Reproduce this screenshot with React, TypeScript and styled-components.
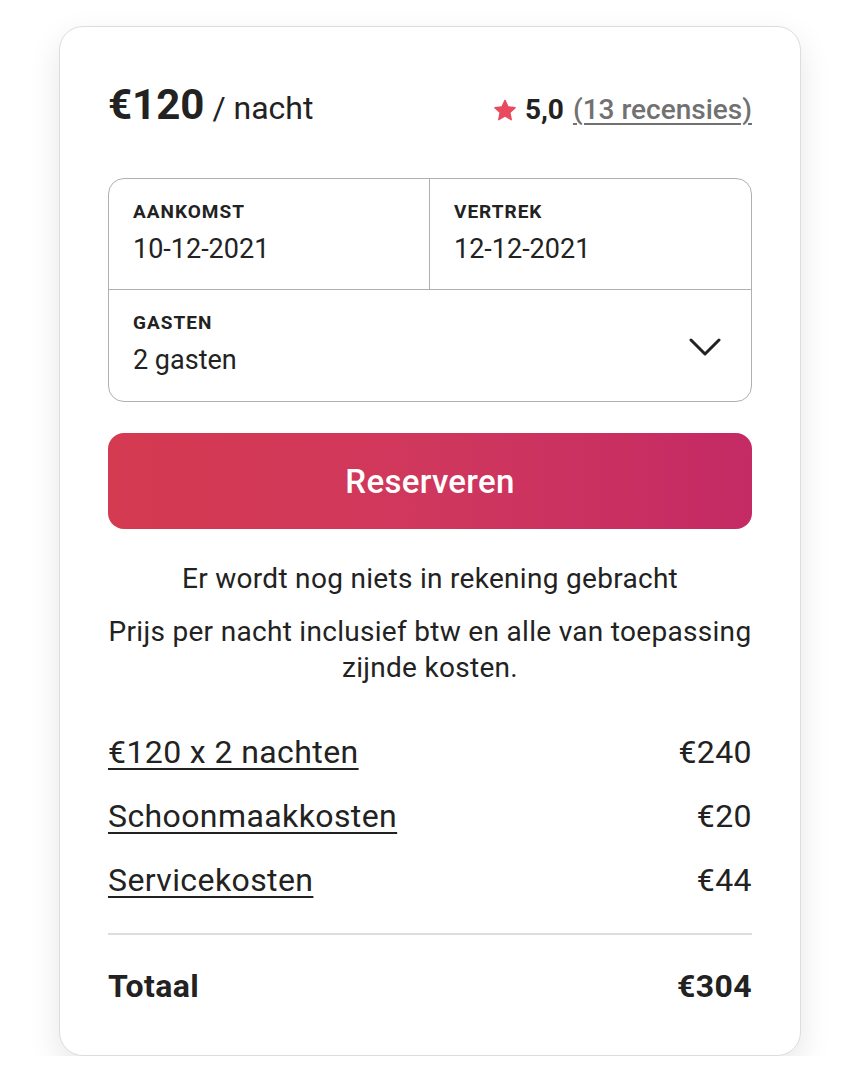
import React from "react";
import styled, { createGlobalStyle } from "styled-components";

const GlobalStyle = createGlobalStyle`
  * { box-sizing: border-box; }
  body {
    margin: 0;
    background: #ffffff;
    font-family: 'Roboto', 'Liberation Sans', sans-serif;
    color: #222222;
  }
`;

const Page = styled.div`
  padding: 26px 0 0 59px;
`;

const Card = styled.div`
  width: 742px;
  border: 1px solid #dddddd;
  border-radius: 24px;
  background: #ffffff;
  box-shadow: 0 12px 32px rgba(0, 0, 0, 0.1);
  padding: 48px 48px 49px;
`;

const Header = styled.div`
  display: flex;
  justify-content: space-between;
  align-items: baseline;
  height: 60px;
  line-height: 60px;
  margin-bottom: 43px;
`;

const Price = styled.div`
  display: flex;
  align-items: baseline;
  gap: 8px;
`;

const Amount = styled.span`
  font-size: 42px;
  font-weight: 700;
  color: #222222;
`;

const PerNight = styled.span`
  font-size: 32px;
  font-weight: 400;
  color: #222222;
`;

const Rating = styled.div`
  display: flex;
  align-items: baseline;
  gap: 9px;
  font-size: 28px;
`;

const Score = styled.span`
  font-weight: 700;
`;

const Reviews = styled.span`
  color: #717171;
  font-weight: 500;
  text-decoration: underline;
  text-decoration-thickness: 2px;
  text-underline-offset: 4px;
`;

const Box = styled.div`
  border: 1px solid #b0b0b0;
  border-radius: 16px;
  overflow: hidden;
`;

const BoxRow = styled.div<{ $split?: boolean }>`
  height: 111px;
  display: grid;
  grid-template-columns: ${(p) => (p.$split ? "1fr 1fr" : "1fr")};
  border-bottom: ${(p) => (p.$split ? "1px solid #b0b0b0" : "none")};
`;

const Field = styled.div<{ $divider?: boolean }>`
  padding: 21px 24px 0;
  border-right: ${(p) => (p.$divider ? "1px solid #b0b0b0" : "none")};
  display: flex;
  align-items: flex-start;
  justify-content: space-between;
`;

const FieldLabel = styled.div`
  font-size: 19px;
  font-weight: 700;
  line-height: 24px;
  letter-spacing: 1px;
  margin-bottom: 7px;
  text-transform: uppercase;
`;

const FieldValue = styled.div`
  font-size: 27px;
  line-height: 36px;
  color: #222222;
`;

const Chevron = styled.svg`
  margin-top: 27px;
  margin-right: 6px;
  width: 32px;
  height: 18px;
`;

const ReserveButton = styled.button`
  display: block;
  width: 100%;
  height: 96px;
  margin-top: 31px;
  border: none;
  border-radius: 16px;
  background: linear-gradient(90deg, #d43a50 0%, #d0375d 50%, #c42a64 100%);
  color: #ffffff;
  font-family: 'Roboto', 'Liberation Sans', sans-serif;
  font-size: 33px;
  font-weight: 500;
  letter-spacing: 0.3px;
  cursor: pointer;
`;

const Note = styled.p<{ $gap: number }>`
  margin: ${(p) => p.$gap}px -10px 0;
  text-align: center;
  font-size: 28px;
  line-height: 36px;
  letter-spacing: 0.3px;
  color: #222222;
`;

const Breakdown = styled.div`
  margin-top: 46px;
  display: flex;
  flex-direction: column;
  gap: 24px;
`;

const Line = styled.div<{ $total?: boolean }>`
  display: flex;
  justify-content: space-between;
  font-size: 32px;
  line-height: 40px;
  font-weight: ${(p) => (p.$total ? 700 : 400)};
  letter-spacing: 0.4px;
`;

const LineLabel = styled.span`
  text-decoration: underline;
  text-decoration-thickness: 2px;
  text-underline-offset: 5px;
`;

const Divider = styled.hr`
  margin: 33px 0 31px;
  border: none;
  height: 2px;
  background: #dddddd;
`;

const Star = () => (
  <svg viewBox="0 0 32 32" width="22" height="22" style={{ alignSelf: "center" }} fill="#e94a5e">
    <path d="M15.094 1.579l-4.124 8.885-9.86 1.27a1 1 0 0 0-.542 1.736l7.293 6.565-1.965 9.852a1 1 0 0 0 1.483 1.061L16 25.951l8.625 4.997a1 1 0 0 0 1.482-1.06l-1.965-9.853 7.293-6.565a1 1 0 0 0-.541-1.735l-9.86-1.271-4.127-8.885a1 1 0 0 0-1.814 0z" />
  </svg>
);

const costs = [
  { label: "€120 x 2 nachten", value: "€240" },
  { label: "Schoonmaakkosten", value: "€20" },
  { label: "Servicekosten", value: "€44" },
];

export default function App() {
  return (
    <Page>
      <GlobalStyle />
      <Card>
        <Header>
          <Price>
            <Amount>€120</Amount>
            <PerNight>/ nacht</PerNight>
          </Price>
          <Rating>
            <Star />
            <Score>5,0</Score>
            <Reviews>(13 recensies)</Reviews>
          </Rating>
        </Header>

        <Box>
          <BoxRow $split>
            <Field $divider>
              <div>
                <FieldLabel>Aankomst</FieldLabel>
                <FieldValue>10-12-2021</FieldValue>
              </div>
            </Field>
            <Field>
              <div>
                <FieldLabel>Vertrek</FieldLabel>
                <FieldValue>12-12-2021</FieldValue>
              </div>
            </Field>
          </BoxRow>
          <BoxRow>
            <Field>
              <div>
                <FieldLabel>Gasten</FieldLabel>
                <FieldValue>2 gasten</FieldValue>
              </div>
              <Chevron viewBox="0 0 32 18" fill="none" stroke="#222222" strokeWidth={3} strokeLinecap="round" strokeLinejoin="round">
                <path d="M2 2 L16 16 L30 2" />
              </Chevron>
            </Field>
          </BoxRow>
        </Box>

        <ReserveButton>Reserveren</ReserveButton>

        <Note $gap={32}>Er wordt nog niets in rekening gebracht</Note>
        <Note $gap={17}>Prijs per nacht inclusief btw en alle van toepassing zijnde kosten.</Note>

        <Breakdown>
          {costs.map((c) => (
            <Line key={c.label}>
              <LineLabel>{c.label}</LineLabel>
              <span>{c.value}</span>
            </Line>
          ))}
        </Breakdown>

        <Divider />

        <Line $total>
          <span>Totaal</span>
          <span>€304</span>
        </Line>
      </Card>
    </Page>
  );
}
